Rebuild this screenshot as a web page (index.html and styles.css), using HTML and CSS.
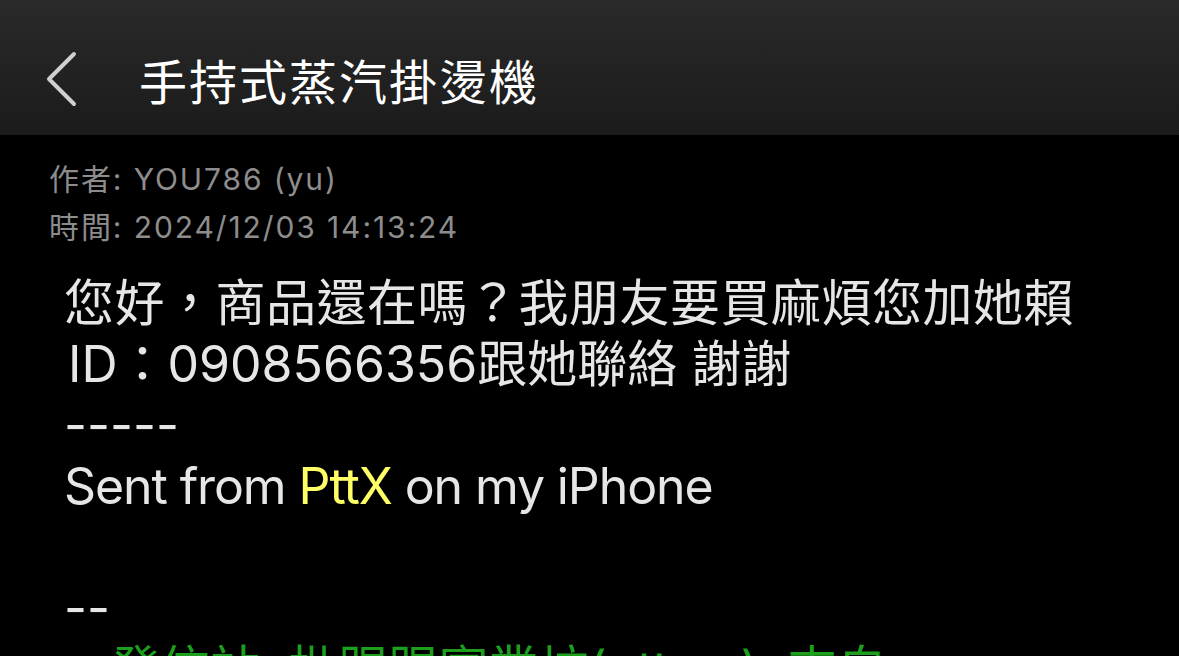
FILE: index.html
```html
<!DOCTYPE html>
<html lang="zh-Hant">
<head>
  <meta charset="UTF-8" />
  <meta name="viewport" content="width=device-width, initial-scale=1.0"/>
  <title>手持式蒸汽掛燙機</title>
  <link rel="stylesheet" href="styles.css">
</head>
<body>

  <header class="nav-bar">
    <button class="back-btn" aria-label="返回">
      <svg width="34" height="56" viewBox="0 0 34 56">
        <polyline points="29,3 4,28 29,53" fill="none" stroke="#d0d0d0" stroke-width="4" stroke-linecap="round" stroke-linejoin="round"/>
      </svg>
    </button>
    <h1 class="nav-title">手持式蒸汽掛燙機</h1>
  </header>

  <main class="post">
    <div class="post-meta">
      <div>作者: YOU786 (yu)</div>
      <div>時間: 2024/12/03 14:13:24</div>
    </div>

    <div class="post-body">
      <div class="line cjk">您好，商品還在嗎？我朋友要買麻煩您加她賴</div>
      <div class="line id-line">ID：0908566356跟她聯絡 謝謝</div>
      <div class="line">-----</div>
      <div class="line latin">Sent from <span class="hl-yellow">PttX</span> on my iPhone</div>
      <div class="line"> </div>
      <div class="line">--</div>
      <div class="line sig">※ 發信站: 批踢踢實業坊(ptt.cc), 來自</div>
    </div>
  </main>

</body>
</html>
```

FILE: styles.css
```css
* {
  margin: 0;
  padding: 0;
  box-sizing: border-box;
}

body {
  background: #000;
  color: #e6e6e6;
  font-family: "Inter", "Noto Sans CJK TC", sans-serif;
  width: 1179px;
  height: 656px;
  overflow: hidden;
}

.nav-bar {
  height: 135px;
  background: linear-gradient(180deg, #2a2a2a, #1b1b1b);
  display: flex;
  align-items: center;
  padding-left: 45px;
  padding-top: 22px;
}

.back-btn {
  background: none;
  border: none;
  display: flex;
  align-items: center;
  width: 94px;
}

.nav-title {
  color: #fff;
  font-family: "Noto Sans CJK TC", sans-serif;
  font-size: 48px;
  font-weight: 400;
  letter-spacing: 2px;
}

.post-meta {
  padding: 20px 0 0 49px;
  color: #8d8d8d;
  font-size: 30px;
  line-height: 48px;
  letter-spacing: 1.9px;
}

.post-body {
  padding: 22px 0 0 64px;
  font-size: 50px;
  line-height: 61px;
}

.post-body .line {
  height: 61px;
  white-space: pre;
}

.post-body .cjk {
  letter-spacing: 0.5px;
}

.post-body .id-line {
  padding-left: 4px;
}

.post-body .latin {
  letter-spacing: -1.1px;
}

.hl-yellow {
  color: #ffff66;
}

.sig {
  color: #1c9f1c;
}
```
